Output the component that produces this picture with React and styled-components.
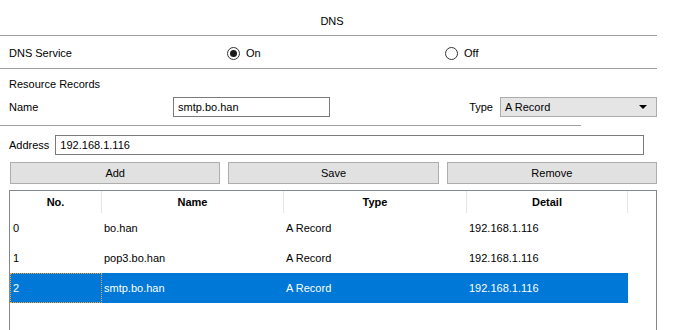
import React from "react";
import styled, { createGlobalStyle } from "styled-components";

const GlobalStyle = createGlobalStyle`
  html, body {
    margin: 0;
    padding: 0;
    background: #ffffff;
    overflow: hidden;
  }
  body {
    font-family: "Liberation Sans", Arial, sans-serif;
    font-size: 11px;
    color: #000;
  }
`;

const Page = styled.div`
  width: 674px;
  height: 330px;
  overflow: hidden;
  display: flex;
  flex-direction: column;

  & > * {
    flex-shrink: 0;
  }
`;

const Title = styled.div`
  width: 664px;
  height: 35px;
  box-sizing: border-box;
  display: flex;
  align-items: flex-end;
  justify-content: center;
  padding-bottom: 7px;
  line-height: 14px;
`;

const Divider = styled.div`
  width: ${(p) => p.$width}px;
  height: 1px;
  background: #a0a0a0;
`;

const ServiceRow = styled.div`
  width: 657px;
  height: 32px;
  display: grid;
  grid-template-columns: 218px 218px 1fr;
  align-items: center;
  padding: 2px 0 0 9px;
  box-sizing: border-box;
`;

const RadioOption = styled.label`
  display: flex;
  align-items: center;
  gap: 6px;
`;

const RadioCircle = styled.span`
  width: 13px;
  height: 13px;
  box-sizing: border-box;
  border: 1px solid #333;
  border-radius: 50%;
  display: flex;
  align-items: center;
  justify-content: center;
  background: #fff;

  &::after {
    content: "";
    width: 7px;
    height: 7px;
    border-radius: 50%;
    background: ${(p) => (p.$checked ? "#1a1a1a" : "transparent")};
  }
`;

const Section = styled.div`
  width: 657px;
  padding: 8px 0 8px 9px;
  box-sizing: border-box;
  display: flex;
  flex-direction: column;
  gap: 6px;
`;

const Label = styled.div`
  line-height: 14px;
  width: ${(p) => (p.$width ? `${p.$width}px` : "auto")};
  flex-shrink: 0;
`;

const NameRow = styled.div`
  display: flex;
  align-items: center;
  justify-content: space-between;
  height: 20px;
`;

const Group = styled.div`
  display: flex;
  align-items: center;
  gap: ${(p) => p.$gap || 0}px;
`;

const TextBox = styled.div`
  width: ${(p) => p.$width}px;
  height: 20px;
  box-sizing: border-box;
  border: 1px solid #7a7a7a;
  background: #fff;
  padding: 0 4px;
  display: flex;
  align-items: center;
`;

const Select = styled.div`
  width: 157px;
  height: 20px;
  box-sizing: border-box;
  border: 1px solid #acacac;
  background: #e5e5e5;
  padding: 0 4px;
  display: flex;
  align-items: center;
  justify-content: space-between;

  &::after {
    content: "";
    width: 0;
    height: 0;
    margin-right: 5px;
    border-left: 4px solid transparent;
    border-right: 4px solid transparent;
    border-top: 4px solid #000;
  }
`;

const AddressRow = styled.div`
  display: flex;
  align-items: center;
  gap: 6px;
  padding-left: 9px;
  margin-top: 9px;
`;

const ButtonBar = styled.div`
  width: 647px;
  margin: 7px 0 0 10px;
  display: grid;
  grid-template-columns: repeat(3, 1fr);
  gap: 8px;
`;

const Button = styled.button`
  height: 22px;
  box-sizing: border-box;
  border: 1px solid #adadad;
  background: #e1e1e1;
  font-family: inherit;
  font-size: 11px;
  color: #000;
  padding: 0;
`;

const Table = styled.div`
  width: 648px;
  height: 160px;
  margin: 6px 0 0 9px;
  box-sizing: border-box;
  border: 1px solid #828790;
  background: #fff;
`;

const COLS = "92px 182px 183px 161px";

const HeaderRow = styled.div`
  display: grid;
  grid-template-columns: ${COLS};
  height: 22px;
`;

const HeaderCell = styled.div`
  display: flex;
  align-items: center;
  justify-content: center;
  font-weight: bold;
  border-right: 1px solid #e5e5e5;
`;

const Row = styled.div`
  display: grid;
  grid-template-columns: ${COLS};
  height: 30px;
  width: 618px;
  background: ${(p) => (p.$selected ? "#0078d7" : "transparent")};
  color: ${(p) => (p.$selected ? "#fff" : "#000")};
`;

const Cell = styled.div`
  display: flex;
  align-items: center;
  padding-left: ${(p) => (p.$first ? 3 : 2)}px;
  outline: ${(p) => (p.$focus ? "1px dotted #f5a442" : "none")};
  outline-offset: -1px;
`;

const records = [
  { no: "0", name: "bo.han", type: "A Record", detail: "192.168.1.116" },
  { no: "1", name: "pop3.bo.han", type: "A Record", detail: "192.168.1.116" },
  { no: "2", name: "smtp.bo.han", type: "A Record", detail: "192.168.1.116" },
];

export default function App() {
  const selected = 2;
  return (
    <>
      <GlobalStyle />
      <Page>
        <Title>DNS</Title>
        <Divider $width={657} />
        <ServiceRow>
          <span>DNS Service</span>
          <RadioOption>
            <RadioCircle $checked />
            On
          </RadioOption>
          <RadioOption>
            <RadioCircle />
            Off
          </RadioOption>
        </ServiceRow>
        <Divider $width={657} />
        <Section>
          <Label>Resource Records</Label>
          <NameRow>
            <Group>
              <Label $width={164}>Name</Label>
              <TextBox $width={157}>smtp.bo.han</TextBox>
            </Group>
            <Group $gap={7}>
              <Label>Type</Label>
              <Select>A Record</Select>
            </Group>
          </NameRow>
        </Section>
        <Divider $width={581} />
        <AddressRow>
          <Label>Address</Label>
          <TextBox $width={589}>192.168.1.116</TextBox>
        </AddressRow>
        <ButtonBar>
          <Button>Add</Button>
          <Button>Save</Button>
          <Button>Remove</Button>
        </ButtonBar>
        <Table>
          <HeaderRow>
            <HeaderCell>No.</HeaderCell>
            <HeaderCell>Name</HeaderCell>
            <HeaderCell>Type</HeaderCell>
            <HeaderCell>Detail</HeaderCell>
          </HeaderRow>
          {records.map((r, i) => (
            <Row key={r.no} $selected={i === selected}>
              <Cell $first $focus={i === selected}>{r.no}</Cell>
              <Cell>{r.name}</Cell>
              <Cell>{r.type}</Cell>
              <Cell>{r.detail}</Cell>
            </Row>
          ))}
        </Table>
      </Page>
    </>
  );
}
